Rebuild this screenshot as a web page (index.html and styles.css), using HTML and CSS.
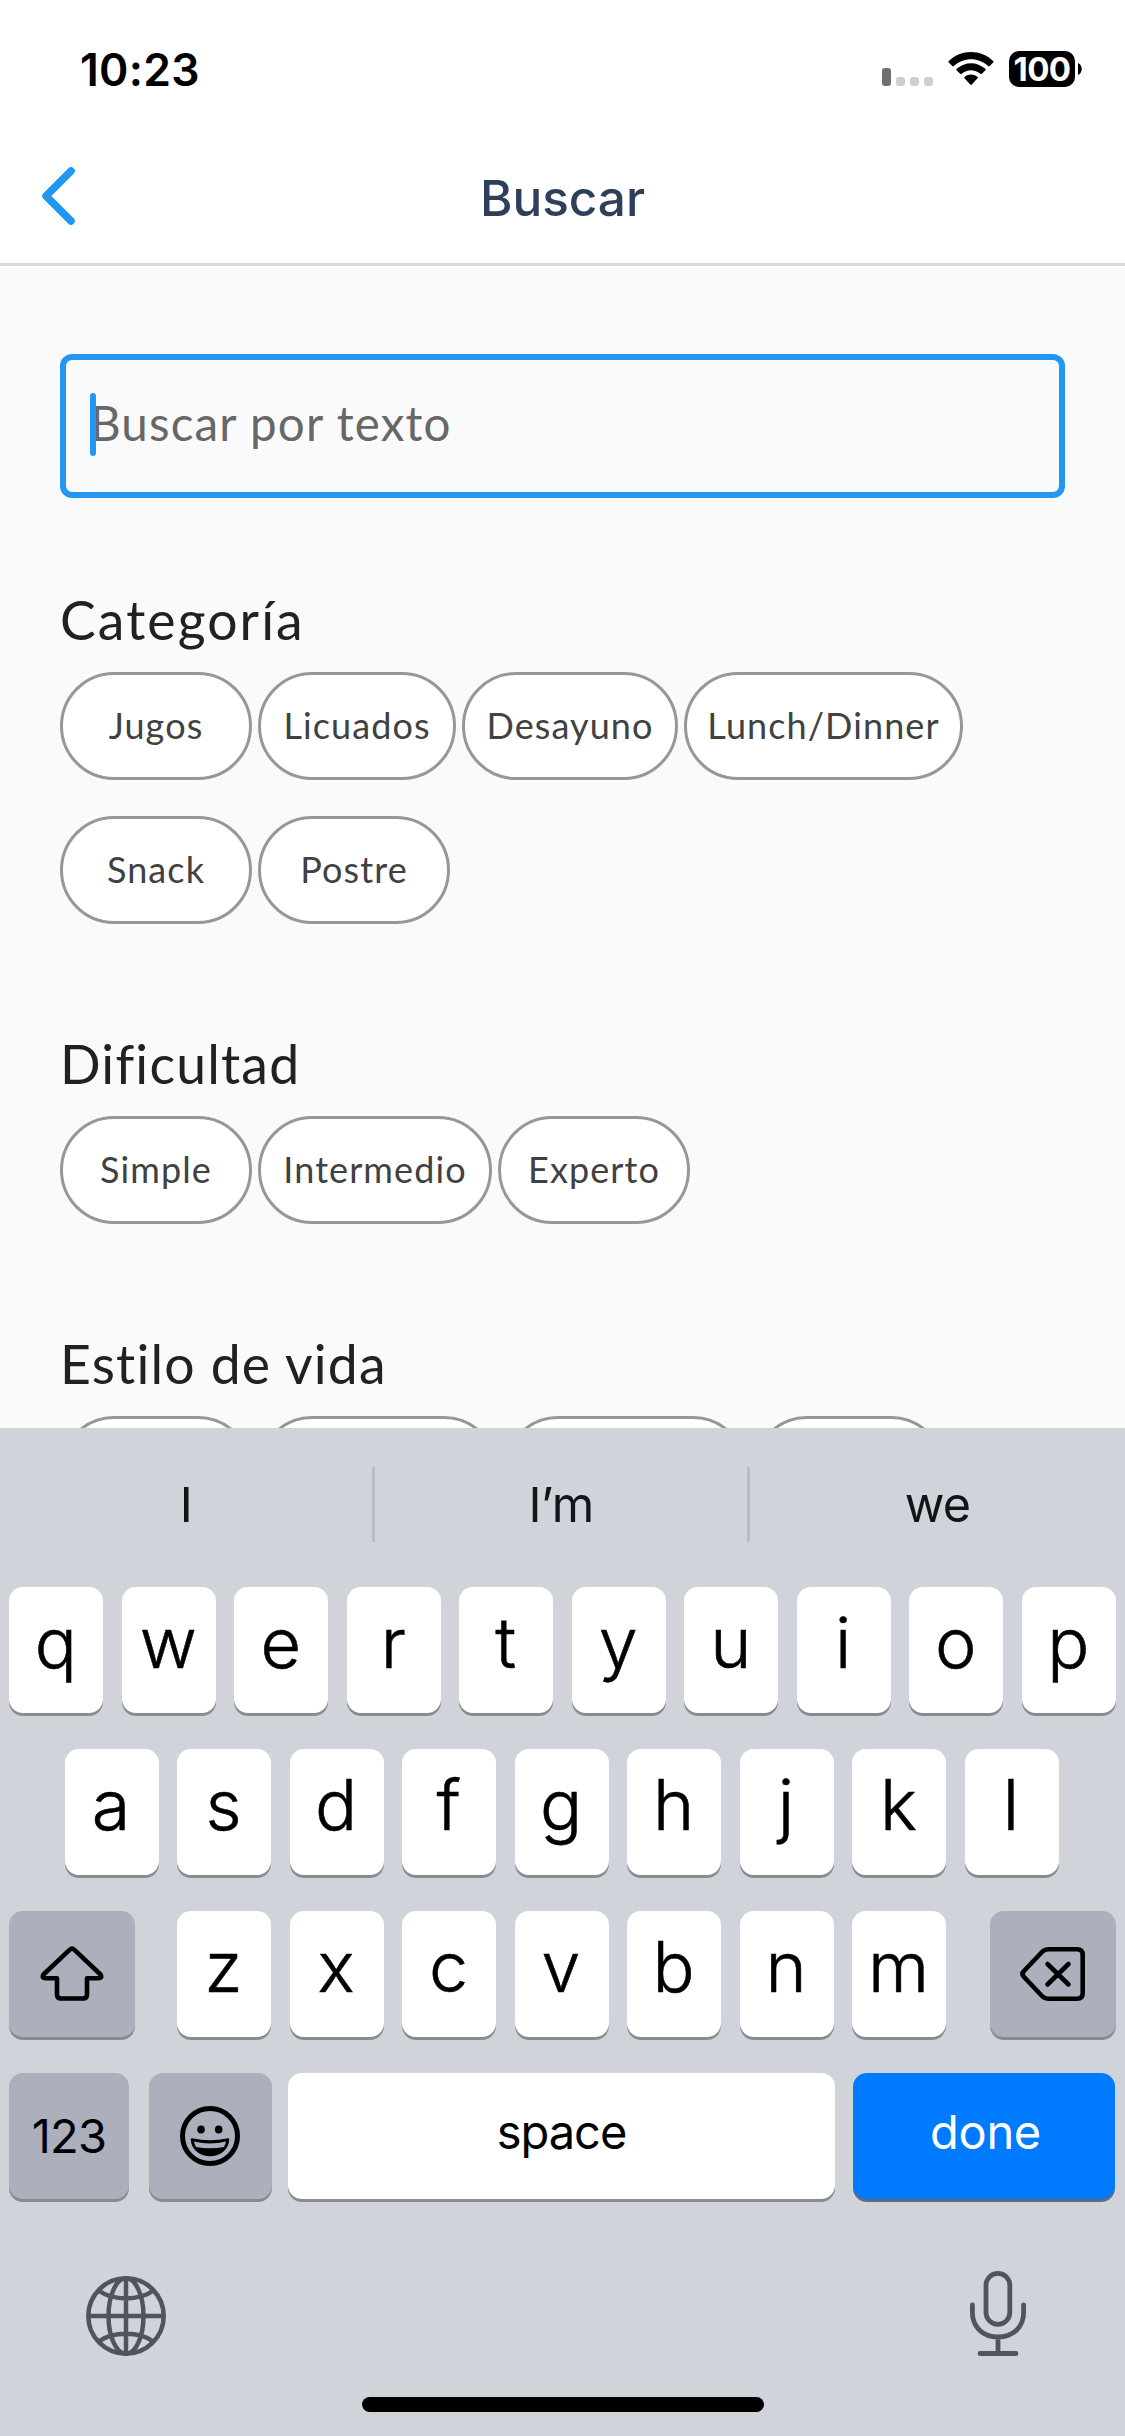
FILE: index.html
```html
<!DOCTYPE html>
<html lang="es">
<head>
<meta charset="utf-8">
<title>Buscar</title>
<link rel="stylesheet" href="styles.css">
</head>
<body>
<div class="screen">
  <div class="status">
    <span class="time">10:23</span>
    <div class="indicators">
      <svg class="signal" viewBox="0 0 51 18"><rect width="9" height="18" rx="3" fill="#6f6f6f"/><g fill="#cecece"><rect x="14" y="9" width="9" height="9" rx="3"/><rect x="28" y="9" width="9" height="9" rx="3"/><rect x="42" y="9" width="9" height="9" rx="3"/></g></svg>
      <svg class="wifi" viewBox="0 0 46 34"><path d="M0.8 10.6Q0 9.8 0.8 9C13-3 33-3 45.200 9Q46 9.800 45.200 10.600L41.700 14Q40.900 14.700 40.100 14C30.500 5 15.500 5 5.900 14Q5.100 14.700 4.300 14ZM8.600 18.300Q7.900 17.500 8.700 16.800C17 9.300 29 9.300 37.300 16.800Q38.100 17.500 37.400 18.300L33.900 21.700Q33.100 22.400 32.300 21.700C27 17 19 17 13.700 21.700Q12.900 22.400 12.100 21.700ZM16.500 26.200Q15.800 25.400 16.700 24.700C20.500 21.900 25.500 21.900 29.300 24.700Q30.200 25.400 29.500 26.200L23.800 32.600Q23 33.300 22.200 32.600Z"/></svg>
      <div class="battery"><span class="level">100</span><svg class="nub" viewBox="0 0 4 12"><path d="M0 0C5 2 5 10 0 12Z"/></svg></div>
    </div>
  </div>
  <header class="nav">
    <svg class="back" viewBox="0 0 34 58"><path d="M30 4L5 29L30 54" fill="none" stroke="#2196f3" stroke-width="7.500" stroke-linecap="round" stroke-linejoin="round"/></svg>
    <h1 class="title">Buscar</h1>
  </header>
  <main class="content">
    <div class="field"><span class="caret"></span><span class="hint">Buscar por texto</span></div>
    <section class="group group-first">
      <h2 class="heading heading-wide">Categoría</h2>
      <div class="chips">
        <span class="chip">Jugos</span><span class="chip w198">Licuados</span><span class="chip w216">Desayuno</span><span class="chip w279">Lunch/Dinner</span><span class="chip">Snack</span><span class="chip">Postre</span>
      </div>
    </section>
    <section class="group">
      <h2 class="heading">Dificultad</h2>
      <div class="chips">
        <span class="chip">Simple</span><span class="chip w234">Intermedio</span><span class="chip">Experto</span>
      </div>
    </section>
    <section class="group">
      <h2 class="heading">Estilo de vida</h2>
      <div class="chips">
        <span class="chip"></span><span class="chip w240"></span><span class="chip w243"></span><span class="chip"></span>
      </div>
    </section>
  </main>
  <div class="keyboard">
    <div class="suggestions"><span class="suggestion">I</span><span class="suggestion">I’m</span><span class="suggestion">we</span></div>
    <div class="keys">
      <div class="row"><span class="key">q</span><span class="key">w</span><span class="key">e</span><span class="key">r</span><span class="key">t</span><span class="key">y</span><span class="key">u</span><span class="key">i</span><span class="key">o</span><span class="key">p</span></div>
      <div class="row row-home"><span class="key">a</span><span class="key">s</span><span class="key">d</span><span class="key">f</span><span class="key">g</span><span class="key">h</span><span class="key">j</span><span class="key">k</span><span class="key">l</span></div>
      <div class="row row-spread">
        <span class="key dark side"><svg class="shift" viewBox="0 0 64 56"><path d="M29.800 3.600Q32 1.600 34.200 3.600L60.500 28.500Q62.500 32 59 32.200H47V48.500Q47 52.500 43 52.500H21Q17 52.500 17 48.500V32.200H5Q1.500 32 3.500 28.500Z" fill="none" stroke="#000" stroke-width="4.600" stroke-linejoin="round"/></svg></span>
        <div class="row row-home"><span class="key">z</span><span class="key">x</span><span class="key">c</span><span class="key">v</span><span class="key">b</span><span class="key">n</span><span class="key">m</span></div>
        <span class="key dark side"><svg class="erase" viewBox="0 0 66 54"><g fill="none" stroke="#000" stroke-width="4.600" stroke-linecap="round" stroke-linejoin="round"><path d="M28 2.300H57Q62.700 2.300 62.700 8V46Q62.700 51.700 57 51.700H28Q25 51.700 22.500 49.500L4 30Q1 27 4 24L22.500 4.500Q25 2.300 28 2.300Z"/><path d="M27.500 17L48.500 37.500M48.500 17L27.500 37.500"/></g></svg></span>
      </div>
      <div class="row row-bottom">
        <span class="key dark numbers">123</span>
        <span class="key dark emoji"><svg class="face" viewBox="0 0 60 60"><circle cx="30" cy="30" r="27.500" fill="none" stroke="#000" stroke-width="5"/><ellipse cx="21" cy="23.500" rx="3.800" ry="4.100"/><ellipse cx="38.700" cy="23.500" rx="3.800" ry="4.100"/><path d="M12 33.500Q30 37.500 48 33.500C47.500 43 39.500 49 30 49S12.500 43 12 33.500Z" stroke="#000" stroke-width="2.500" stroke-linejoin="round"/><path d="M14 35.500Q30 39.500 46 35.500Q45.500 38.500 44 41Q30 43.500 16 41Q14.500 38.500 14 35.500Z" fill="#abb0bc"/></svg></span>
        <span class="key space">space</span>
        <span class="key done">done</span>
      </div>
    </div>
    <div class="tools">
      <svg class="globe" viewBox="0 0 80 80"><g fill="none" stroke="#50555c" stroke-width="4.500"><circle cx="40" cy="40" r="37.700"/><ellipse cx="40" cy="40" rx="17.500" ry="37.700"/><path d="M40 2V78M2 40H78M12.500 14.500C27 25 53 25 67.500 14.500M12.500 65.500C27 55 53 55 67.500 65.500"/></g></svg>
      <svg class="mic" viewBox="0 0 56 85"><g fill="none" stroke="#50555c" stroke-width="4.800" stroke-linecap="round"><rect x="16" y="2.400" width="23.800" height="51" rx="11.900"/><path d="M2.400 34V41.500C2.400 56 13 66 28 66S53.600 56 53.600 41.500V34M28 66V82M10 82.500H46"/></g></svg>
    </div>
    <div class="home"></div>
  </div>
</div>
</body>
</html>
```
FILE: styles.css
```css
* { box-sizing: border-box; }
body { margin: 0; background: #fafafa; }
svg { display: block; flex: none; }
h1, h2 { margin: 0; font-weight: 400; }
.screen {
  width: 1125px; height: 2436px; overflow: hidden;
  display: flex; flex-direction: column;
  font-family: Inter, "Liberation Sans", sans-serif;
}
.status {
  flex: none; height: 136px; padding: 0 43px 0 80px; background: #fff;
  display: flex; justify-content: space-between; align-items: center;
}
.time { font-size: 44.5px; font-weight: 600; letter-spacing: 0.3px; line-height: 60px; margin-top: 3px; }
.indicators { display: flex; align-items: center; height: 36px; margin-top: 2px; }
.signal { width: 51px; height: 18px; margin: 16px 15px 0 0; }
.wifi { width: 46px; height: 34px; margin-right: 15px; }
.battery { display: flex; align-items: center; gap: 3px; }
.level {
  width: 66px; height: 36px; border-radius: 10px; background: #000; color: #fff;
  font-size: 33px; font-weight: 700; line-height: 36px; letter-spacing: -0.6px; text-align: center;
}
.nub { width: 4px; height: 12px; }
.nav {
  flex: none; height: 130px; border-bottom: 3px solid #dadada; background: #fff;
  display: grid; grid-template-columns: 200px 1fr 200px;
}
.back { width: 34px; height: 58px; margin: 31px 0 0 41px; }
.title { font-size: 49.5px; font-weight: 500; line-height: 60px; margin-top: 32px; text-align: center; color: #2e3f5b; }
.content {
  flex: none; height: 1162px; overflow: hidden; padding: 88px 60px 0;
  font-family: Lato, "Noto Sans", sans-serif; color: #202122;
}
.field {
  height: 144px; border: 6px solid #2196f3; border-radius: 12px; padding: 0 24px 8px;
  display: flex; align-items: center; font-size: 47.5px; color: #676767;
}
.caret { width: 6px; height: 63px; border-radius: 3px; background: #2196f3; margin-right: -6px; position: relative; top: 2px; }
.hint { letter-spacing: 1.15px; }
.group { margin-top: 106px; }
.group-first { margin-top: 88px; }
.heading { font-size: 53.5px; line-height: 66px; padding-bottom: 20px; height: 86px; letter-spacing: 1.2px; }
.heading-wide { letter-spacing: 2.1px; }
.chips { display: flex; flex-wrap: wrap; gap: 36px 6px; }
.chip {
  width: 192px; height: 108px; border: 3px solid #979797; border-radius: 54px; background: #fff;
  display: flex; align-items: center; justify-content: center; padding-bottom: 3px;
  font-size: 36px; letter-spacing: 1.1px; color: #404142; white-space: nowrap;
}
.w198 { width: 198px; }
.w216 { width: 216px; }
.w234 { width: 234px; }
.w240 { width: 240px; }
.w243 { width: 243px; }
.w279 { width: 279px; }
.keyboard { flex: none; height: 1008px; background: #d0d3da; }
.suggestions { height: 159px; padding-top: 39px; display: grid; grid-template-columns: repeat(3, 1fr); }
.suggestion { height: 75px; line-height: 76px; text-align: center; font-size: 48.5px; font-weight: 400; letter-spacing: -0.7px; color: #111518; border-right: 3px solid #b9bcc2; }
.suggestion:last-child { border-right: 0; }
.keys { padding: 0 9px; display: flex; flex-direction: column; gap: 36px; }
.row { display: flex; justify-content: center; gap: 18.5px; }
.row-home { margin-left: -2px; }
.row-spread { justify-content: space-between; }
.key {
  width: 94px; height: 126px; border-radius: 14px; background: #fff; box-shadow: 0 3px 0 #898b90;
  display: flex; align-items: center; justify-content: center; padding: 0 1px 16px 0;
  font-size: 70px; font-weight: 300; -webkit-text-stroke: 0.6px currentColor; color: #000;
}
.dark { background: #abb0bc; padding: 0; }
.side { width: 126px; }
.shift { width: 64px; height: 56px; }
.erase { width: 66px; height: 54px; }
.row-bottom { justify-content: flex-start; gap: 0; }
.numbers, .space, .done { font-size: 47px; font-weight: 400; -webkit-text-stroke: 0; }
.numbers { width: 120px; letter-spacing: -0.8px; padding-bottom: 1px; }
.emoji { width: 123px; margin-left: 20px; }
.face { width: 60px; height: 60px; margin-right: 2px; }
.space, .done { padding: 0 0 9px; }
.space { width: 547px; margin-left: 16px; letter-spacing: -1px; }
.done { width: 262px; margin-left: 18px; background: #007aff; color: #fff; box-shadow: 0 3px 0 #5d6b80; padding-left: 3px; letter-spacing: -0.3px; }
.tools { height: 198px; padding: 72px 99px 0 86px; display: flex; justify-content: space-between; align-items: flex-start; }
.globe { width: 80px; height: 80px; margin-top: 5px; }
.mic { width: 56px; height: 85px; }
.home { width: 402px; height: 15px; border-radius: 8px; background: #000; margin: 0 auto; }
```
